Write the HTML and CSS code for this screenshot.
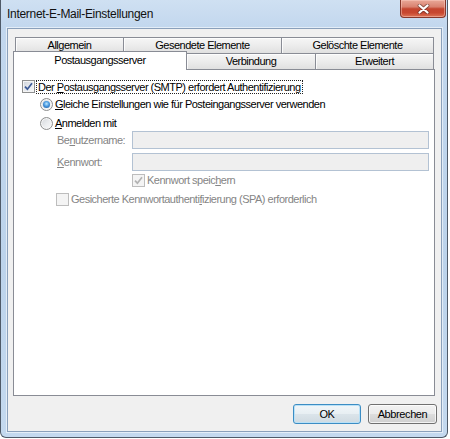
FILE: index.html
```html
<!DOCTYPE html>
<html>
<head>
<meta charset="utf-8">
<title>Internet-E-Mail-Einstellungen</title>
<link rel="stylesheet" href="styles.css">
</head>
<body>
<div class="window">
  <div class="titlebar">
    <span class="title">Internet-E-Mail-Einstellungen</span>
    <div class="close">
      <svg width="13" height="10" viewBox="0 0 13 10">
        <path d="M2.5 1.5 L10.5 8.5 M10.5 1.5 L2.5 8.5" stroke="#4a2620" stroke-width="3.8" stroke-linecap="round" opacity="0.55" fill="none"/>
        <path d="M2.5 1.5 L10.5 8.5 M10.5 1.5 L2.5 8.5" stroke="#ffffff" stroke-width="2.2" stroke-linecap="round" fill="none"/>
      </svg>
    </div>
  </div>
  <div class="client">
    <div class="tabctl">
      <div class="tabrow">
        <div class="tab t1">Allgemein</div>
        <div class="tab t2">Gesendete Elemente</div>
        <div class="tab t3">Gelöschte Elemente</div>
      </div>
      <div class="tabrow">
        <div class="tab sel">Postausgangsserver</div>
        <div class="tab t5">Verbindung</div>
        <div class="tab t6">Erweitert</div>
      </div>
      <div class="panel">
        <div class="row r1">
          <span class="cb">
            <svg width="9" height="9" viewBox="0 0 9 9"><path d="M1 4.6 L3.4 7.2 L8 1.2" stroke="#3c5a96" stroke-width="1.7" fill="none"/></svg>
          </span>
          <span class="focus">Der <u>P</u>ostausgangsserver (SMTP) erfordert Authentifizierung</span>
        </div>
        <div class="row r2">
          <span class="rb"><span class="dot"></span></span>
          <span class="lbl"><u>G</u>leiche Einstellungen wie für Posteingangsserver verwenden</span>
        </div>
        <div class="row r3">
          <span class="rb"></span>
          <span class="lbl"><u>A</u>nmelden mit</span>
        </div>
        <div class="row r4">
          <span class="flabel dis">Be<u>n</u>utzername:</span>
          <span class="inp"></span>
        </div>
        <div class="row r5">
          <span class="flabel dis"><u>K</u>ennwort:</span>
          <span class="inp"></span>
        </div>
        <div class="row r6">
          <span class="cb disabled">
            <svg width="9" height="9" viewBox="0 0 9 9"><path d="M1 4.6 L3.4 7.2 L8 1.2" stroke="#b3b3b3" stroke-width="1.7" fill="none"/></svg>
          </span>
          <span class="lbl dis">Kennwort speic<u>h</u>ern</span>
        </div>
        <div class="row r7">
          <span class="cb disabled"></span>
          <span class="lbl dis">Gesicherte Kennwortauthenti<u>f</u>izierung (SPA) erforderlich</span>
        </div>
      </div>
    </div>
    <div class="buttons">
      <button class="btn ok">OK</button>
      <button class="btn cancel">Abbrechen</button>
    </div>
  </div>
</div>
</body>
</html>
```
FILE: styles.css
```css
html, body {
  margin: 0;
  padding: 0;
  background: #ffffff;
}
body {
  width: 450px;
  height: 439px;
  overflow: hidden;
  font-family: "Liberation Sans", Arial, sans-serif;
  font-size: 11px;
  color: #000;
}
.window {
  width: 448px;
  height: 438px;
  box-sizing: border-box;
  border: 1px solid #4f5a68;
  border-top: none;
  border-radius: 0 0 6px 6px;
  padding: 0 5px 5px 6px;
  background: linear-gradient(to bottom, #cfe0f2 0, #c2d7ee 28px, #bcd3eb 60%, #c4d9ef 100%);
}
.titlebar {
  height: 28px;
  display: flex;
  align-items: flex-start;
}
.title {
  margin-top: 6px;
  line-height: 16px;
  font-size: 12px;
  letter-spacing: -0.3px;
  color: #111;
}
.close {
  margin-left: auto;
  margin-right: -4px;
  width: 46px;
  height: 18px;
  box-sizing: border-box;
  border: 1px solid #86372b;
  border-top: none;
  border-radius: 0 0 4px 4px;
  background: linear-gradient(to bottom, #e9a898 0, #d98270 40%, #c4452f 52%, #c8472f 75%, #dd7456 100%);
  box-shadow: inset 0 0 0 1px rgba(255, 210, 200, 0.45);
  display: flex;
  align-items: center;
  justify-content: center;
}
.client {
  height: 404px;
  box-sizing: border-box;
  border: 1px solid #8aa0bb;
  background: #f0f0f0;
  box-shadow: 0 0 0 1px rgba(255, 255, 255, 0.55);
}
.tabctl {
  margin: 8px 0 0 5px;
  width: 422px;
}
.tabrow {
  display: flex;
  height: 16px;
  padding-left: 2px;
}
.tab {
  box-sizing: border-box;
  height: 16px;
  border: 1px solid #898c95;
  border-bottom: none;
  background: linear-gradient(to bottom, #f6f6f6 0, #ececec 50%, #e0e0e0 100%);
  box-shadow: inset 1px 1px 0 rgba(255, 255, 255, 0.8);
  text-align: center;
  line-height: 14px;
  letter-spacing: -0.5px;
  white-space: nowrap;
}
.tab + .tab {
  margin-left: -1px;
}
.t1 { width: 109px; }
.t2 { width: 159px; }
.t3 { width: 153px; }
.t5 { width: 130px; }
.t6 { width: 119px; }
.tab.sel {
  width: 174px;
  height: 19px;
  margin-left: -2px;
  margin-top: -2px;
  padding-top: 1px;
  background: #ffffff;
  box-shadow: none;
  position: relative;
  z-index: 1;
}
.panel {
  box-sizing: border-box;
  width: 422px;
  height: 327px;
  border: 1px solid #898c95;
  background: #ffffff;
}
.row {
  display: flex;
  align-items: center;
  white-space: nowrap;
  letter-spacing: -0.5px;
}
.r1 { margin-top: 9px; height: 15px; padding-left: 8px; }
.r2 { margin-top: 3px; height: 14px; padding-left: 26px; }
.r3 { margin-top: 5px; height: 14px; padding-left: 26px; }
.r4 { margin-top: 1px; height: 18px; padding-left: 43px; }
.r5 { margin-top: 4px; height: 18px; padding-left: 43px; }
.r6 { margin-top: 2px; height: 14px; padding-left: 118px; }
.r7 { margin-top: 5px; height: 14px; padding-left: 42px; }
.cb {
  flex: none;
  width: 13px;
  height: 13px;
  box-sizing: border-box;
  border: 1px solid #8e8f8f;
  background: linear-gradient(135deg, #cdd2d9 0, #e6e9ed 50%, #f7f8f9 100%);
  box-shadow: inset 0 0 0 1px #f4f4f4;
  display: flex;
  align-items: center;
  justify-content: center;
}
.cb svg { display: block; }
.cb.disabled {
  border-color: #bdbdbd;
  background: #f4f4f4;
  box-shadow: none;
}
.rb {
  flex: none;
  width: 13px;
  height: 13px;
  box-sizing: border-box;
  border: 1px solid #8e8f8f;
  border-radius: 50%;
  background: linear-gradient(135deg, #d3d6da 0, #eceef0 55%, #fbfbfb 100%);
  box-shadow: inset 0 0 0 1px #f6f6f6;
  display: flex;
  align-items: center;
  justify-content: center;
}
.dot {
  width: 7px;
  height: 7px;
  border-radius: 50%;
  background: radial-gradient(circle at 50% 40%, #bfe8ff 0, #4a9ae0 45%, #18529a 100%);
}
.focus {
  margin-left: 1px;
  border: 1px dotted #222;
  padding: 0 1px;
  line-height: 12px;
}
.lbl {
  margin-left: 2px;
}
.flabel {
  width: 75px;
  flex: none;
}
.dis {
  color: #858585;
}
.inp {
  flex: none;
  width: 297px;
  height: 18px;
  box-sizing: border-box;
  border: 1px solid #b3c2d3;
  background: #efefef;
}
.buttons {
  display: flex;
  justify-content: flex-end;
  gap: 7px;
  margin-top: 8px;
  padding-right: 4px;
}
.btn {
  width: 68px;
  height: 20px;
  box-sizing: border-box;
  padding: 0;
  border: 1px solid #707070;
  border-radius: 3px;
  background: linear-gradient(to bottom, #f2f2f2 0, #ebebeb 48%, #dddddd 52%, #cfcfcf 100%);
  box-shadow: inset 0 0 0 1px rgba(255, 255, 255, 0.75);
  font-family: "Liberation Sans", Arial, sans-serif;
  font-size: 11px;
  letter-spacing: -0.4px;
  color: #000;
}
.btn.ok {
  border-color: #3c8dc4;
  box-shadow: inset 0 0 0 1px #b9e1f7;
  background: linear-gradient(to bottom, #f1f6f9 0, #e8eff3 48%, #dbe4ea 52%, #cfdae1 100%);
}
.btn.cancel {
  width: 69px;
}
```
